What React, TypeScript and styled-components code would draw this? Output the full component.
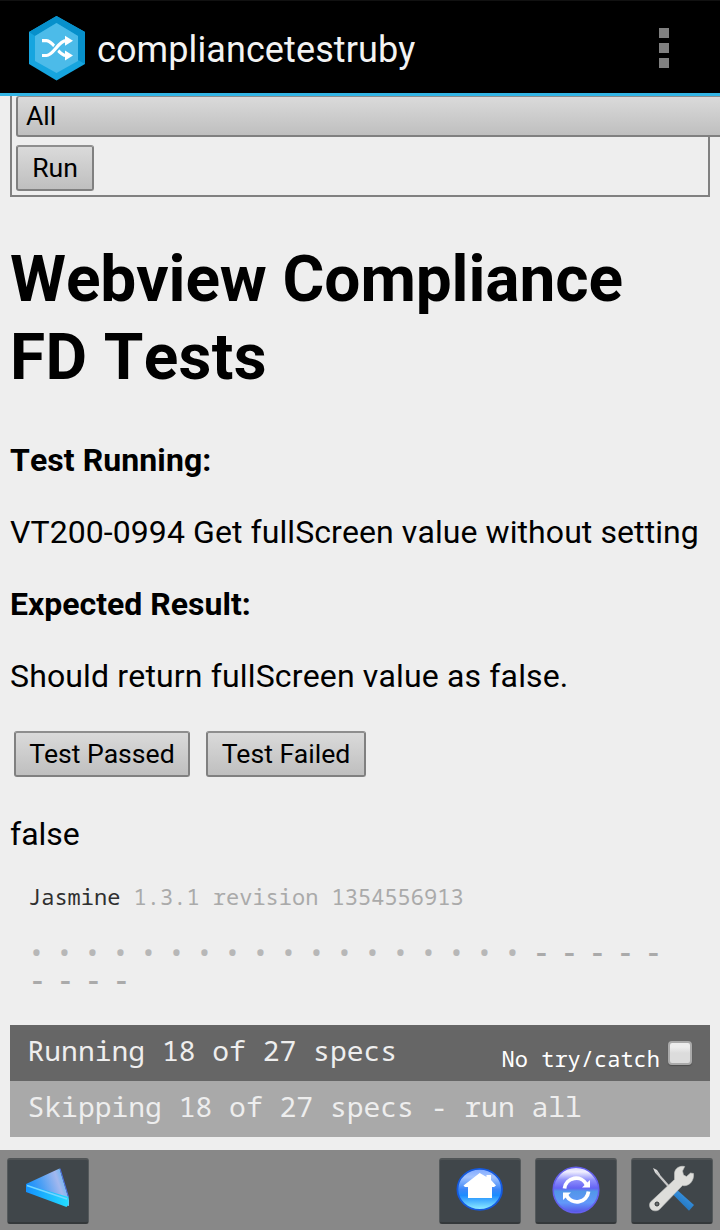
import React from "react";
import styled, { createGlobalStyle } from "styled-components";

const GlobalStyle = createGlobalStyle`
  * { box-sizing: border-box; }
  body { margin: 0; background: #eeeeee; overflow: hidden; }
`;

const Screen = styled.div`
  display: flex;
  flex-direction: column;
  width: 720px;
  height: 1230px;
  overflow: hidden;
  background: #eeeeee;
  color: #000;
  font-family: Roboto, sans-serif;
  font-kerning: none;
`;

const ActionBar = styled.header`
  display: flex;
  align-items: center;
  flex: none;
  height: 96px;
  padding: 0 51px 0 28px;
  background: #000;
  border-top: 1px solid #111;
  border-bottom: 3px solid #33b5e5;
  > svg { margin-top: 2px; }
`;

const AppTitle = styled.span`
  flex: 1;
  margin: 6px 0 0 12px;
  color: #f3f3f3;
  font-size: 36px;
  line-height: 44px;
  letter-spacing: 0.1px;
  white-space: nowrap;
`;

const Overflow = styled.div`
  display: flex;
  flex-direction: column;
  gap: 5px;
  margin-top: 2px;
`;

const Square = styled.i`
  width: 10px;
  height: 10px;
  background: #808080;
`;

const Page = styled.main`
  flex: 1;
  min-height: 0;
  padding: 0 10px;
`;

const FilterBox = styled.section`
  height: 101px;
  padding: 0 4px;
  border: 2px solid #808080;
  border-top: 0;
`;

const Button = styled.button<{ $width: number }>`
  display: block;
  width: ${(p) => p.$width}px;
  height: 46px;
  padding: 0;
  border: 2px solid #808080;
  border-top-color: #8e8e8e;
  border-radius: 3px;
  background: linear-gradient(#dadada, #bfbfbf);
  color: #000;
  font: 26.6px/42px Roboto, sans-serif;
  text-align: center;
  white-space: nowrap;
`;

const Select = styled(Button)`
  height: 41px;
  margin-bottom: 8px;
  padding-left: 8px;
  border-top-width: 1px;
  line-height: 38px;
  text-align: left;
`;

const Heading = styled.h1`
  margin: 44px 0 43px;
  font-size: 64px;
  font-weight: 700;
  line-height: 78px;
  letter-spacing: -0.1px;
`;

const HeadingTail = styled.span`
  letter-spacing: 0.35px;
`;

const Line = styled.p<{ $bold?: boolean; $gap?: number; $spacing?: number }>`
  margin: 0 0 ${(p) => p.$gap ?? 32}px;
  font-size: 32px;
  font-weight: ${(p) => (p.$bold ? 700 : 400)};
  line-height: 40px;
  letter-spacing: ${(p) => p.$spacing ?? 0}px;
  white-space: nowrap;
`;

const Verdict = styled.div`
  display: flex;
  gap: 16px;
  margin: 35px 4px 37px;
`;

const Reporter = styled.section`
  font-family: "Droid Sans Mono", "Noto Sans Mono", "DejaVu Sans Mono", monospace;
`;

const Banner = styled.div`
  margin: 0 18px;
  color: #aaa;
  font-size: 22px;
  line-height: 28px;
  white-space: nowrap;
`;

const Product = styled.span`
  color: #303030;
`;

const Symbols = styled.ul`
  display: grid;
  grid-template-columns: repeat(23, 28px);
  grid-auto-rows: 28px;
  margin: 28px 0 31px 18px;
  padding: 0;
  list-style: none;
`;

const Symbol = styled.li<{ $skipped: boolean }>`
  width: ${(p) => (p.$skipped ? 19 : 17)}px;
  color: ${(p) => (p.$skipped ? "#aaa" : "#b7b7b7")};
  font-size: 28px;
  font-weight: ${(p) => (p.$skipped ? 600 : 400)};
  line-height: ${(p) => (p.$skipped ? 27 : 28)}px;
  text-align: center;
`;

const Status = styled.div<{ $tone: string }>`
  display: flex;
  justify-content: space-between;
  height: 56px;
  padding: 0 18px 0 17.5px;
  background: ${(p) => p.$tone};
  color: #eee;
  font-size: 28px;
  line-height: 51px;
  white-space: nowrap;
`;

const TryCatch = styled.label`
  display: flex;
  gap: 8px;
  color: #fff;
  font-size: 22px;
  line-height: 67px;
  height: 56px;
`;

const Checkbox = styled.span`
  width: 24px;
  height: 24px;
  margin-top: 16px;
  border: 2px solid #aaa;
  border-radius: 4px;
  background: linear-gradient(#eee 20%, #dcdcdc 50%);
  box-shadow: 0 1px 1px #4d4d4d;
`;

const Toolbar = styled.footer`
  display: flex;
  flex: none;
  gap: 14px;
  height: 80px;
  padding: 8px 7px 0;
  background: #888;
`;

const Tool = styled.div<{ $first?: boolean }>`
  width: 82px;
  height: 66px;
  margin-right: ${(p) => (p.$first ? "auto" : 0)};
  border: 1px solid #555a5c;
  border-top: 2px solid #505456;
  border-bottom: 2px solid #34383a;
  border-radius: 3px;
  background: #40464a;
  svg { display: block; width: 80px; height: 62px; }
`;

const Logo = () => (
  <svg width="57" height="65" viewBox="0 0 57 65">
    <path d="M28.500 0 57 16v32L28.500 64.500 1 48V16Z" fill="#16a5df" />
    <path d="M28.500 0 57 16v32l-7-4V20L28.500 7 7 20l-6-4Z" fill="#0790cb" />
    <path d="M28.500 7 50 20v25L28.500 57 7 45V20Z" fill="#4cbbe9" />
    <path d="M14 24.700h4.500c7 0 12 14.800 19.500 14.800" fill="none" stroke="#fff" strokeWidth="3.200" />
    <path d="M23 38.500c4.500-3.500 6.500-10.500 12-13.500" fill="none" stroke="#4cbbe9" strokeWidth="6" />
    <path d="M14 39.500h4.500c7 0 12-14.800 19.500-14.800" fill="none" stroke="#fff" strokeWidth="3.200" />
    <path d="m37 19.800 8 5-8 5ZM37 34.500l8 5-8 5Z" fill="#fff" />
  </svg>
);

const BackIcon = () => (
  <svg viewBox="0 0 80 62">
    <defs>
      <linearGradient id="face" x1="0" y1=".6" x2="1" y2=".3">
        <stop stopColor="#078cff" /><stop offset=".4" stopColor="#4fa0f4" /><stop offset=".75" stopColor="#a3b8ee" /><stop offset="1" stopColor="#4fb6f6" />
      </linearGradient>
      <linearGradient id="edge"><stop stopColor="#1591ff" /><stop offset="1" stopColor="#22ddff" /></linearGradient>
    </defs>
    <path d="M18 24 51.500 8.500 61 40v6L18 31Z" fill="url(#face)" />
    <path d="M18 24.500 60.500 37v7.500l-2 2.500L18 32Z" fill="url(#edge)" />
    <path d="m19 25.500 40 13.500" stroke="#75d6ff" strokeWidth="1.500" />
    <path d="M52 8.500 60.500 37" stroke="#4d72e6" strokeWidth="1" />
  </svg>
);

const HomeIcon = () => (
  <svg viewBox="0 0 80 62">
    <defs>
      <linearGradient id="homeOrb" x2="0" y2="1">
        <stop stopColor="#7ea8ff" /><stop offset=".2" stopColor="#a5c4ff" /><stop offset=".5" stopColor="#3b86f8" /><stop offset=".65" stopColor="#1c8cff" /><stop offset="1" stopColor="#94f1ff" />
      </linearGradient>
    </defs>
    <ellipse cx="39.700" cy="29.300" rx="22.300" ry="20.500" fill="url(#homeOrb)" stroke="#1559dd" strokeWidth="1.800" />
    <path d="M39.700 13 46.500 17v-2h4.500V20l5 5.500-2 1.500H52v11H28V27h-3l-1.500-1.500Z" fill="#fff" />
  </svg>
);

const RefreshIcon = () => (
  <svg viewBox="0 0 80 62">
    <defs>
      <linearGradient id="syncOrb" x2="0" y2="1">
        <stop stopColor="#d8d6ff" /><stop offset=".1" stopColor="#f0efff" /><stop offset=".28" stopColor="#8f90fb" /><stop offset=".46" stopColor="#6563f4" /><stop offset=".53" stopColor="#5296e9" /><stop offset=".78" stopColor="#6298fa" /><stop offset="1" stopColor="#5651e5" />
      </linearGradient>
    </defs>
    <circle cx="40" cy="30" r="22.800" fill="url(#syncOrb)" stroke="#6460ed" strokeWidth="1.500" />
    <path d="M28.500 28.500a11.700 11.700 0 0 1 22-4M52.500 31.500a11.700 11.700 0 0 1-22 4" fill="none" stroke="#fff" strokeWidth="3.800" />
    <path d="M54 20v7.500h-8ZM27 40v-7.500h8Z" fill="#fff" />
  </svg>
);

const ToolsIcon = () => (
  <svg viewBox="0 0 80 62">
    <defs>
      <linearGradient id="grip" x1="0" y1=".4" x2=".3" y2="0" gradientTransform="scale(1.6)">
        <stop stopColor="#1e70b9" /><stop offset="1" stopColor="#3b97e6" />
      </linearGradient>
    </defs>
    <path d="m21 8 4 2 3 4.500-1 1.500-4-3.500Z" fill="#ddd" />
    <path d="m24 12 15 17" stroke="#c8c8c8" strokeWidth="2.200" />
    <path d="m39 32.500 4.500-4L62 45l-5 5.700Z" fill="url(#grip)" />
    <path d="M52.700 6.500c-5-1-9.500 1.500-10.200 6.500v6.500L18.500 42c-2.500 3.500 0 9.500 5.500 8.800 2 0 3.500-1.300 5-3l21.500-22.300c6 1.500 12-4.500 11-12l-3-.5-4 3.500-3-1.500-1-4Z" fill="#dededb" stroke="#bfc1c0" strokeWidth=".6" />
    <circle cx="25" cy="44" r="2" fill="#6a6e70" stroke="#333738" />
  </svg>
);

const symbols = "•".repeat(18) + "-".repeat(9);

export default function App() {
  return (
    <Screen>
      <GlobalStyle />
      <ActionBar>
        <Logo />
        <AppTitle>compliancetestruby</AppTitle>
        <Overflow><Square /><Square /><Square /></Overflow>
      </ActionBar>
      <Page>
        <FilterBox>
          <Select $width={730}>All</Select>
          <Button $width={78}>Run</Button>
        </FilterBox>
        <Heading>Webview Compliance<br /><HeadingTail>FD Tests</HeadingTail></Heading>
        <Line $bold $spacing={0.08}>Test Running:</Line>
        <Line $spacing={0.08}>VT200-0994 Get fullScreen value without setting</Line>
        <Line $bold>Expected Result:</Line>
        <Line $spacing={0.15}>Should return fullScreen value as false.</Line>
        <Verdict>
          <Button $width={176}>Test Passed</Button>
          <Button $width={160}>Test Failed</Button>
        </Verdict>
        <Line $gap={28}>false</Line>
        <Reporter>
          <Banner><Product>Jasmine</Product> 1.3.1 revision 1354556913</Banner>
          <Symbols>
            {[...symbols].map((s, i) => <Symbol key={i} $skipped={s === "-"}>{s}</Symbol>)}
          </Symbols>
          <Status $tone="#666">
            <span>Running 18 of 27 specs</span>
            <TryCatch>No try/catch<Checkbox /></TryCatch>
          </Status>
          <Status $tone="#a9a9a9"><span>Skipping 18 of 27 specs - run all</span></Status>
        </Reporter>
      </Page>
      <Toolbar>
        <Tool $first><BackIcon /></Tool>
        <Tool><HomeIcon /></Tool>
        <Tool><RefreshIcon /></Tool>
        <Tool><ToolsIcon /></Tool>
      </Toolbar>
    </Screen>
  );
}
